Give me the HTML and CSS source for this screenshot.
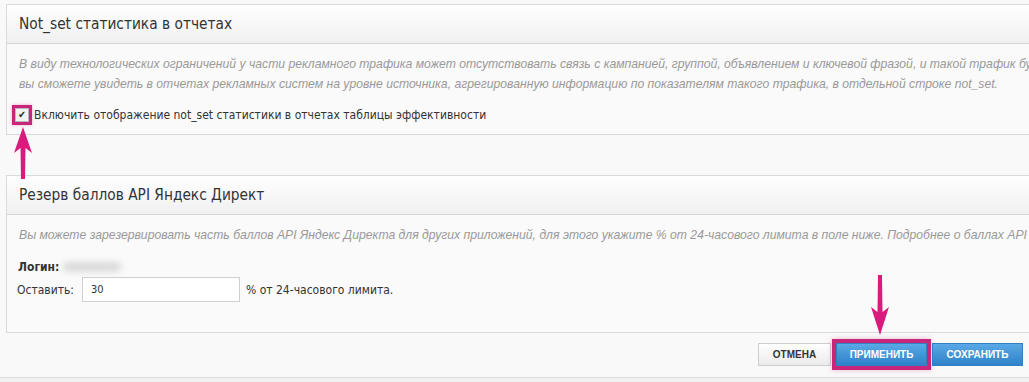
FILE: index.html
```html
<!DOCTYPE html>
<html lang="ru">
<head>
  <meta charset="UTF-8">
  <title>Настройки отчетов</title>
  <link rel="stylesheet" href="styles.css">
</head>
<body>
  <div class="page">
    <div class="panel">
      <div class="panel-head">Not_set статистика в отчетах</div>
      <div class="panel-body">
        <p class="hint">В виду технологических ограничений у части рекламного трафика может отсутствовать связь с кампанией, группой, объявлением и ключевой фразой, и такой трафик будет<br>вы сможете увидеть в отчетах рекламных систем на уровне источника, агрегированную информацию по показателям такого трафика, в отдельной строке not_set.</p>
        <label class="check-row">
          <span class="check marked"><span class="tick">&#10004;</span></span>
          Включить отображение not_set статистики в отчетах таблицы эффективности
        </label>
      </div>
    </div>

    <div class="panel second">
      <div class="panel-head">Резерв баллов API Яндекс Директ</div>
      <div class="panel-body">
        <p class="hint">Вы можете зарезервировать часть баллов API Яндекс Директа для других приложений, для этого укажите % от 24-часового лимита в поле ниже. Подробнее о баллах API читайте</p>
        <div class="login"><b>Логин:</b> <span class="blur"></span></div>
        <div class="keep-row">
          <span class="keep-label">Оставить:</span>
          <input class="keep-input" type="text" value="30">
          <span>% от 24-часового лимита.</span>
        </div>
      </div>
    </div>

    <div class="actions">
      <button class="btn">Отмена</button>
      <button class="btn blue marked">Применить</button>
      <button class="btn blue">Сохранить</button>
    </div>
  </div>
  <div class="bottom"></div>

  <!-- annotation arrows -->
  <svg class="arrow arrow-up" width="22" height="54" viewBox="0 0 22 54">
    <path d="M11 1 L20 27 L13.5 22 L13 53 L9 53 L8.5 22 L2 27 Z" fill="#d81b7c"/>
  </svg>
  <svg class="arrow arrow-down" width="22" height="62" viewBox="0 0 22 62">
    <path d="M11 61 L20 33 L13.5 38 L13 1 L9 1 L8.5 38 L2 33 Z" fill="#d81b7c"/>
  </svg>
</body>
</html>
```

FILE: styles.css
```css
body {
  margin: 0;
  background-color: #f9f9f9;
  font-family: "DejaVu Sans Condensed", "DejaVu Sans", sans-serif;
  color: #333;
  overflow: hidden;
  width: 1029px;
  height: 382px;
  position: relative;
}
.page {
  padding: 4px 0 0 6px;
  overflow: hidden;
}
.panel {
  width: 1060px;
  border: 1px solid #dadada;
  background-color: #fafafa;
}
.panel.second {
  margin-top: 40px;
}
.panel-head {
  height: 38px;
  line-height: 38px;
  padding-left: 12px;
  font-size: 15.3px;
  color: #333;
  background: linear-gradient(#ffffff, #f0f0f0);
  border-bottom: 1px solid #d6d6d6;
}
.panel-body {
  padding: 10px 12px 0 12px;
}
.hint {
  margin: 0;
  font-family: "Liberation Sans", Arial, sans-serif;
  font-style: italic;
  font-size: 12.2px;
  line-height: 20px;
  color: #999;
  white-space: nowrap;
  overflow: hidden;
}
.check-row {
  display: flex;
  align-items: center;
  gap: 5px;
  height: 22px;
  margin-top: 10px;
  margin-bottom: 8px;
  margin-left: -4px;
  font-size: 12px;
  color: #333;
}
.check {
  width: 12px;
  height: 12px;
  border: 1px solid #b9b9b9;
  background: #f2f2f2;
  display: flex;
  align-items: center;
  justify-content: center;
}
.check.marked {
  outline: 3px solid #c8267a;
  outline-offset: 0;
  box-shadow: 0 0 3px 3px rgba(200, 38, 122, 0.35);
}
.tick {
  font-size: 10px;
  line-height: 10px;
  color: #222;
}
.login {
  margin-top: 12px;
  font-size: 12px;
  height: 20px;
  line-height: 20px;
  display: flex;
  align-items: center;
  gap: 4px;
  margin-left: -1px;
}
.blur {
  display: inline-block;
  width: 58px;
  height: 10px;
  background: #dadada;
  border-radius: 5px;
  filter: blur(3px);
}
.keep-row {
  display: flex;
  align-items: center;
  gap: 6px;
  font-size: 12px;
  margin-bottom: 30px;
  margin-left: -2px;
}
.keep-input {
  width: 158px;
  height: 25px;
  padding: 0 8px;
  border: 1px solid #cfcfcf;
  background: #fff;
  font-family: "DejaVu Sans Condensed", sans-serif;
  font-size: 11px;
  color: #333;
  margin-left: 2px;
  box-sizing: border-box;
}
.actions {
  display: flex;
  justify-content: flex-end;
  gap: 5px;
  padding: 10px 6px 0 0;
  height: 44px;
  box-sizing: border-box;
}
.btn {
  height: 23px;
  padding: 0;
  border: 1px solid #cdcdcd;
  background: linear-gradient(#ffffff, #ebebeb);
  font-family: "Liberation Sans", Arial, sans-serif;
  font-size: 10px;
  font-weight: bold;
  text-transform: uppercase;
  color: #333;
  width: 73px;
}
.btn.blue {
  border-color: #2f7fc1;
  background: linear-gradient(#5aa8e6, #2e82c8);
  color: #fff;
  width: 91px;
}
.btn.marked {
  outline: 4px solid #c8267a;
  outline-offset: 0;
  box-shadow: 0 0 5px 4px rgba(200, 38, 122, 0.3);
}
.bottom {
  border-top: 1px solid #dcdcdc;
  height: 10px;
  background: #f2f2f2;
}
.arrow {
  position: absolute;
}
.arrow-up {
  left: 12px;
  top: 126px;
}
.arrow-down {
  left: 869px;
  top: 274px;
}
```
